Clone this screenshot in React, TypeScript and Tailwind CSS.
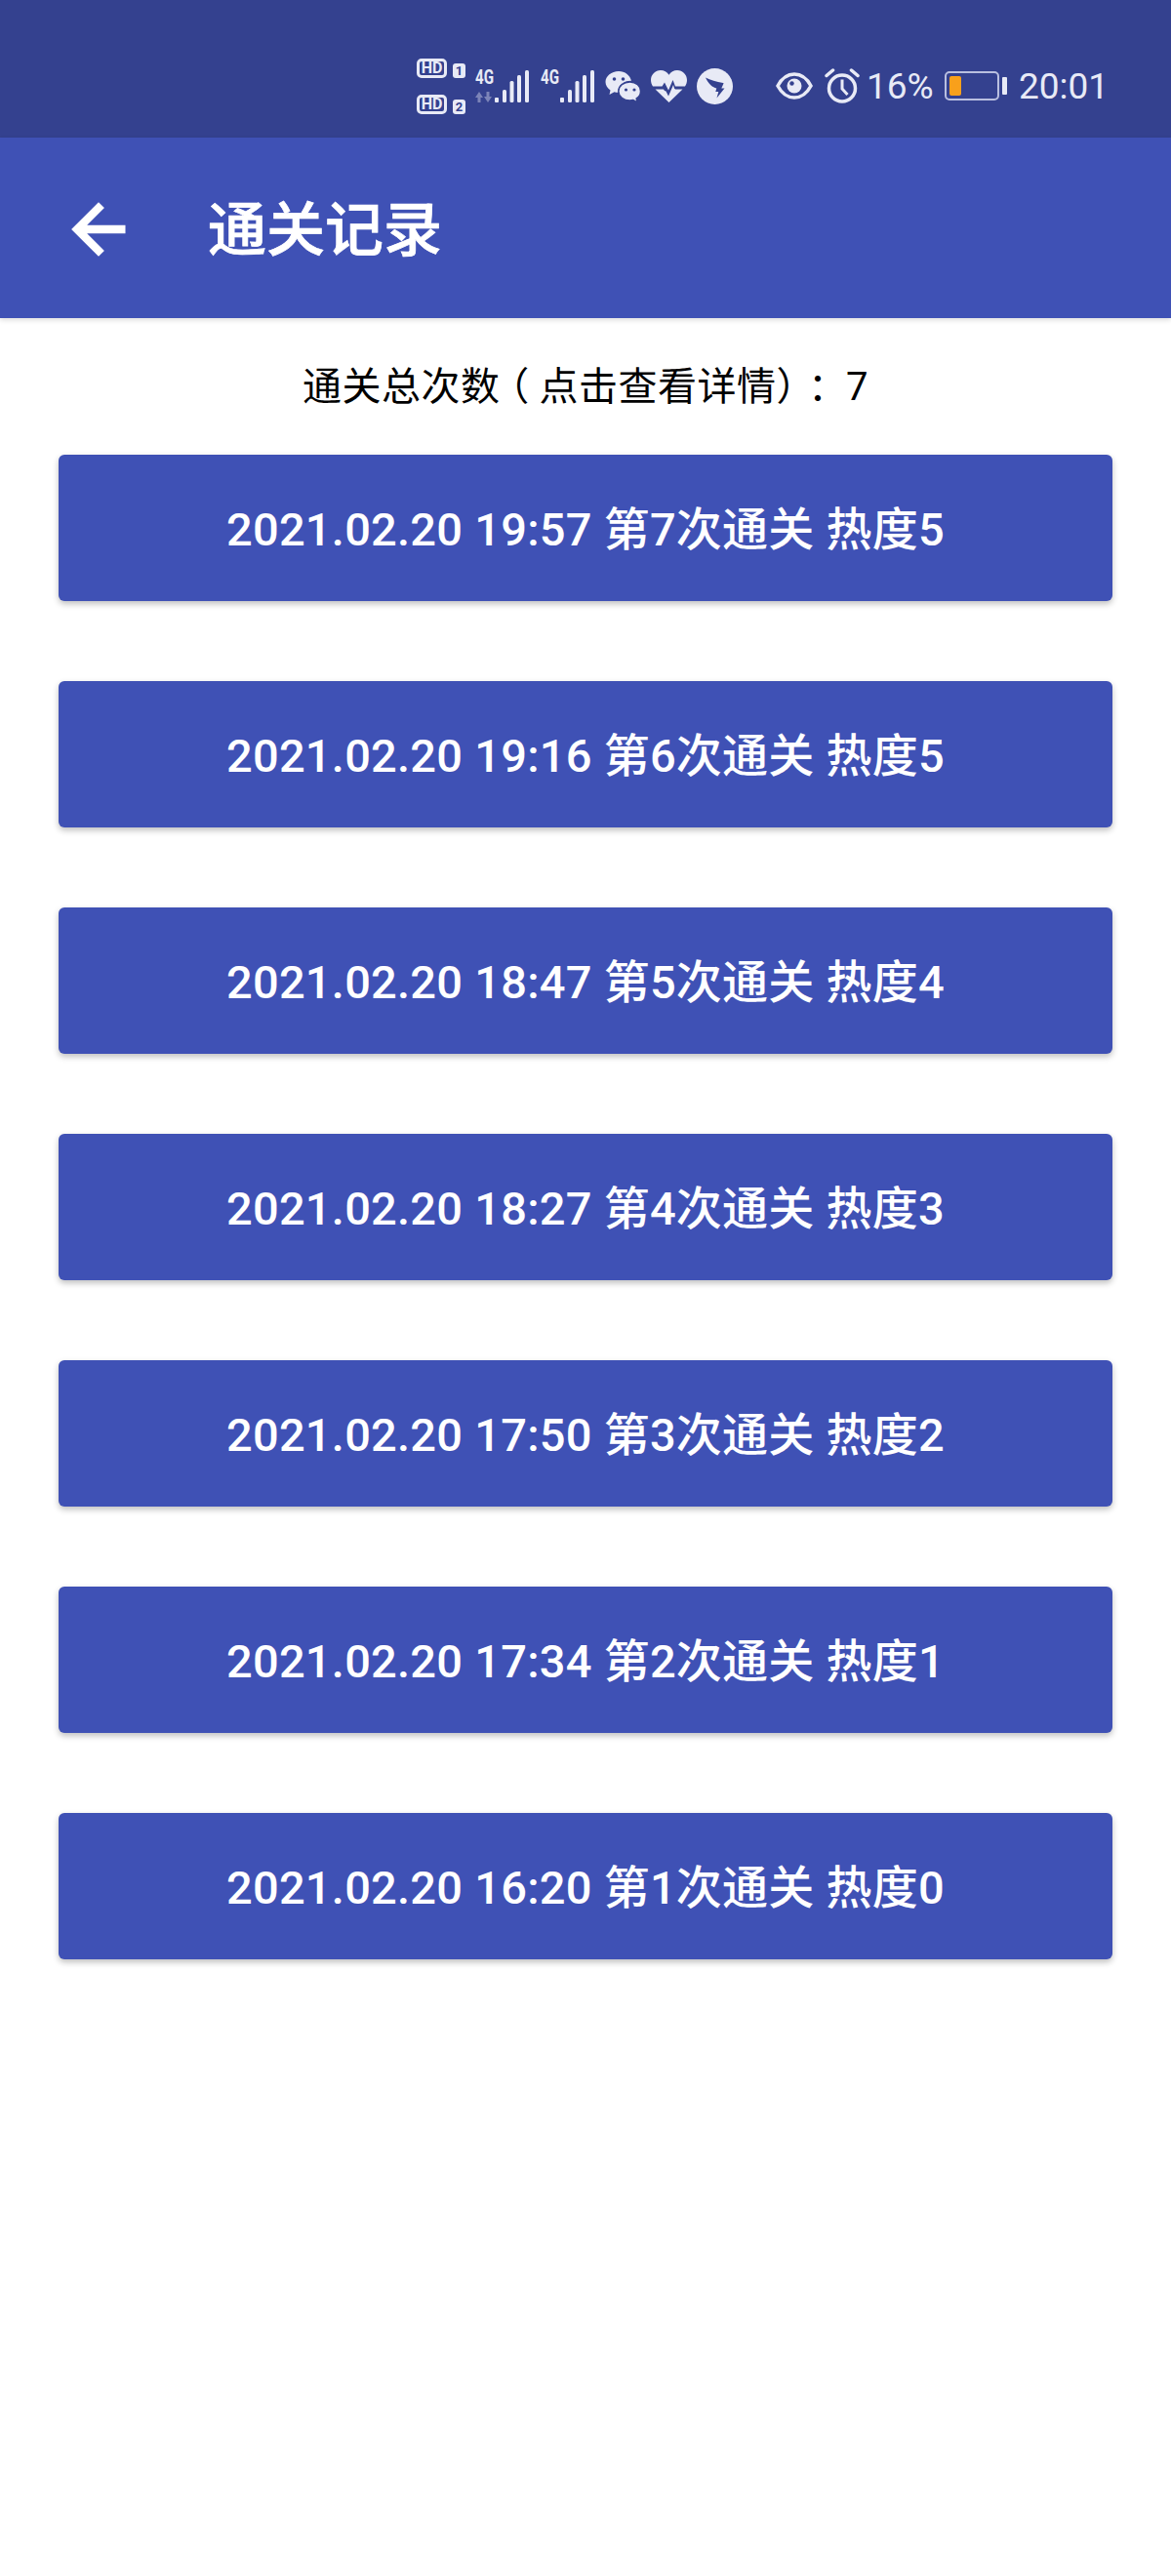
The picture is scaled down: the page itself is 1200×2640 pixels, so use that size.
import React from 'react';

const records = [
  '2021.02.20 19:57 第7次通关 热度5',
  '2021.02.20 19:16 第6次通关 热度5',
  '2021.02.20 18:47 第5次通关 热度4',
  '2021.02.20 18:27 第4次通关 热度3',
  '2021.02.20 17:50 第3次通关 热度2',
  '2021.02.20 17:34 第2次通关 热度1',
  '2021.02.20 16:20 第1次通关 热度0',
];

const font = { fontFamily: 'Roboto, "Noto Sans CJK SC", sans-serif' };
const iconColor = '#e8eaf6';

const SimTag: React.FC<{ n: string }> = ({ n }) => (
  <div className="flex items-end gap-[6px] h-[21px]">
    <span className="flex items-center justify-center w-[31px] h-[20px] rounded-[5px] border-[3px] border-[#e8eaf6] text-[#e8eaf6] text-[16px] font-bold leading-[14px]">
      HD
    </span>
    <span className="flex items-center justify-center w-[13px] h-[15px] rounded-[3px] bg-[#e8eaf6] text-[#34418f] text-[13px] font-bold leading-[15px]">
      {n}
    </span>
  </div>
);

const Signal: React.FC<{ arrows?: boolean }> = ({ arrows }) => (
  <svg width="56" height="44" viewBox="0 0 56 44" className="block">
    <text x="0" y="20" fontSize="20" fontWeight="700" fill={iconColor} fontFamily="Roboto" textLength="19" lengthAdjust="spacingAndGlyphs">4G</text>
    {arrows && (
      <g fill={iconColor} opacity="0.4">
        <path d="M0 34l4-6 4 6H5.500v5h-3v-5z" />
        <path d="M9 33l4 6 4-6h-2.500v-5h-3v5z" />
      </g>
    )}
    <rect x="20" y="34" width="4" height="5" rx="1" fill={iconColor} />
    <rect x="28" y="26" width="4" height="13" rx="1.500" fill={iconColor} />
    <rect x="35.500" y="17" width="4" height="22" rx="1.500" fill={iconColor} />
    <rect x="43" y="11" width="4" height="28" rx="1.500" fill={iconColor} />
    <rect x="51" y="6" width="4" height="33" rx="1.500" fill={iconColor} />
  </svg>
);

const WeChat = () => (
  <svg width="37" height="33" viewBox="0 0 37 33" className="block">
    <path d="M14 1C6.500 1 .5 6 .5 12c0 3.500 2 6.500 5 8.500L4.500 25l5-2.800c1.300.4 2.600.6 4 .6 0-.5 0-.8 0-1.300C13.500 15 19.500 10.500 27 10.700 25.500 5 20.500 1 14 1z" fill={iconColor} />
    <path d="M25.500 12C19 12 13.800 16.200 13.800 21.500S19 31 25.500 31c1.200 0 2.300-.2 3.400-.5l4.100 2.300-.8-3.800c2.800-1.800 4.300-4.500 4.300-7.500C36.500 16.200 32 12 25.500 12z" fill={iconColor} stroke="#34418f" strokeWidth="1.500" />
    <circle cx="9.500" cy="9" r="1.800" fill="#34418f" />
    <circle cx="18.500" cy="9" r="1.800" fill="#34418f" />
    <circle cx="21.500" cy="20" r="1.600" fill="#34418f" />
    <circle cx="30" cy="20" r="1.600" fill="#34418f" />
  </svg>
);

const Heart = () => (
  <svg width="37" height="33" viewBox="0 0 37 33" className="block">
    <path d="M10 0C4.500 0 0 4.500 0 10c0 2.500.8 4.700 2 6.500h9.500l2.500-4 4 8 4.500-10.500 2.500 6.500H35c1.300-1.800 2-4 2-6.500C37 4.500 32.500 0 27 0c-3.500 0-6.700 1.800-8.500 4.700C16.700 1.800 13.500 0 10 0z" fill={iconColor} />
    <path d="M4.500 19.500h8.500l1 1.500 1.500 .5 2.500 5 5-11.500 1 3.500 1 1h7.500L18.500 33z" fill={iconColor} />
  </svg>
);

const DingTalk = () => (
  <svg width="37" height="37" viewBox="0 0 37 37" className="block">
    <circle cx="18.500" cy="18.500" r="18.500" fill={iconColor} />
    <path d="M9 9.500c5 2.500 11 4.500 18 5.500 .5 0 .5 .5 .3 1l-2 4.500h3.200l-8 10 1.800-6.500h-3l1-3.500c-4-1-8-4-11.300-11z" fill="#34418f" />
  </svg>
);

const Eye = () => (
  <svg width="38" height="28" viewBox="0 0 38 28" className="block">
    <path d="M2 14C6 6.500 12 2 19 2s13 4.500 17 12C32 21.500 26 26 19 26S6 21.500 2 14z" fill="none" stroke={iconColor} strokeWidth="3.500" />
    <circle cx="19" cy="14" r="7.500" fill={iconColor} />
    <circle cx="16.500" cy="11.500" r="2.200" fill="#34418f" />
  </svg>
);

const Alarm = () => (
  <svg width="36" height="36" viewBox="0 0 36 36" className="block">
    <circle cx="18" cy="20.500" r="13.500" fill="none" stroke={iconColor} strokeWidth="3.500" />
    <path d="M18 11.500v9.500l5.500 6" fill="none" stroke={iconColor} strokeWidth="3" />
    <path d="M2 7.500l6.500-5.500M34 7.500l-6.500-5.500" fill="none" stroke={iconColor} strokeWidth="3.500" strokeLinecap="round" />
  </svg>
);

const Battery = () => (
  <div className="flex items-center gap-[3px]">
    <div className="w-[56px] h-[30px] rounded-[5px] border-2 border-[#b9bfe0] p-[3px]">
      <div className="w-[12px] h-full rounded-[2px] bg-[#f9a01b]" />
    </div>
    <div className="w-[5px] h-[18px] rounded-[1px] bg-[#e8eaf6]" />
  </div>
);

export default function App() {
  return (
    <div className="w-[1200px] h-[2640px] bg-white flex flex-col" style={font}>
      {/* status bar */}
      <div className="h-[141px] bg-[#34418f] flex items-center text-[#e8eaf6] pt-[35px] pl-[427px]">
        <div className="flex flex-col gap-[16px] w-[60px]">
          <SimTag n="1" />
          <SimTag n="2" />
        </div>
        <Signal arrows />
        <div className="ml-[11px]"><Signal /></div>
        <div className="ml-[10px]"><WeChat /></div>
        <div className="ml-[10px]"><Heart /></div>
        <div className="ml-[10px]"><DingTalk /></div>
        <div className="ml-[44px]"><Eye /></div>
        <div className="ml-[12px]"><Alarm /></div>
        <span className="ml-[7px] w-[71px] text-[37px] leading-[44px] pt-[2px]">16%</span>
        <div className="ml-[9px]"><Battery /></div>
        <span className="ml-[12px] text-[37px] leading-[44px] pt-[2px]">20:01</span>
      </div>

      {/* toolbar */}
      <div className="h-[185px] bg-[#3f51b5] flex items-center shadow-[0_2px_5px_rgba(0,0,0,0.14)]">
        <svg width="80" height="80" viewBox="0 0 24 24" fill="#ffffff" stroke="#ffffff" strokeWidth="0.5" className="ml-[61px] mt-[2px]">
          <path d="M20 11H7.830l5.590-5.590L12 4l-8 8 8 8 1.410-1.410L7.830 13H20v-2z" />
        </svg>
        <span className="ml-[72px] pt-[6px] text-[60px] font-medium leading-[70px] text-white [-webkit-text-stroke:0.7px_white]">通关记录</span>
      </div>

      {/* total */}
      <div className="h-[140px] pt-[47px] text-center text-[40px] leading-[48px] tracking-[0.5px] text-black">
        通关总次数
        <span className="inline-block w-[40px] text-center [font-feature-settings:'halt']">（</span>
        点击查看详情）
        <span className="ml-[12px] -mr-[12px]">：</span>
        {' '}7
      </div>

      {/* records */}
      <div className="flex flex-col gap-[82px] px-[60px]">
        {records.map((r) => (
          <button
            key={r}
            className="h-[150px] pt-[5px] rounded-[6px] bg-[#3f51b5] text-white text-[47px] font-medium tracking-[0.25px] shadow-[0_3px_6px_rgba(0,0,0,0.25)]"
          >
            {r}
          </button>
        ))}
      </div>
    </div>
  );
}
